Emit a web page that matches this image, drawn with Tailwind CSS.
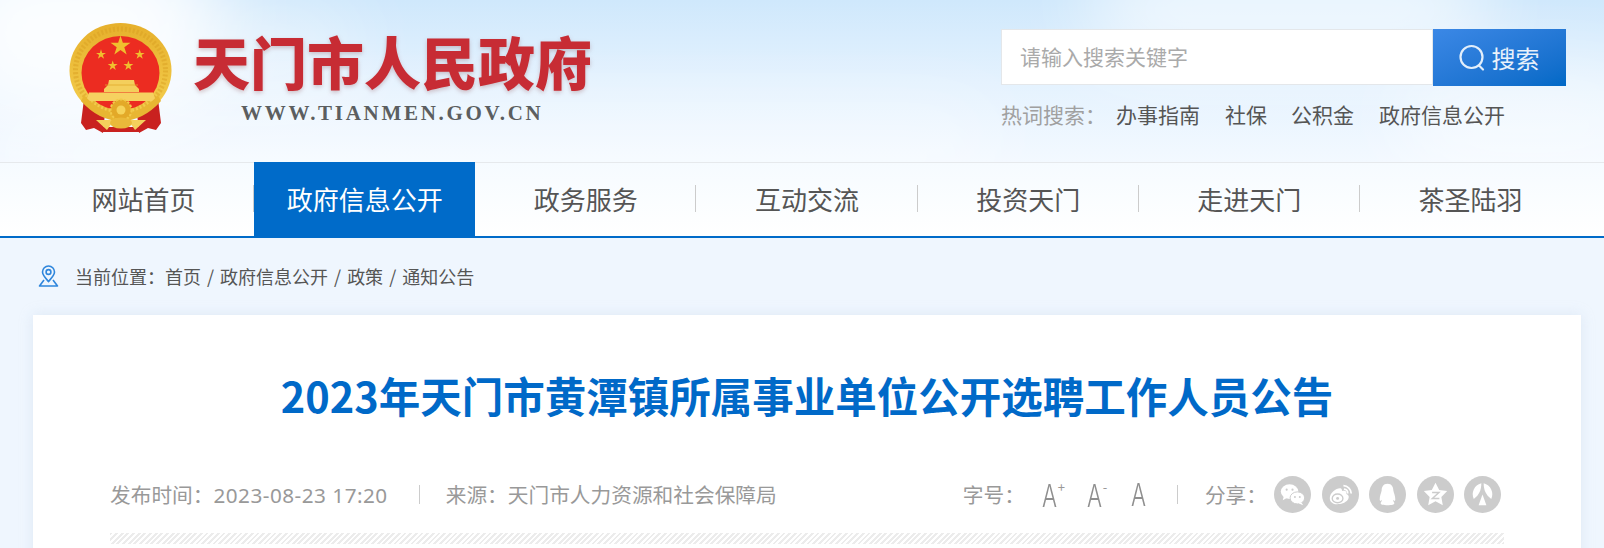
<!DOCTYPE html>
<html lang="zh-CN">
<head>
  <meta charset="UTF-8">
  <meta name="viewport" content="width=device-width, initial-scale=1.0">
  <title>天门市人民政府</title>
  <script src="https://cdn.jsdelivr.net/npm/@tailwindcss/browser@4"></script>
</head>
<body class="bg-[#eff6fe] font-['Noto_Sans_CJK_SC','Noto_Sans',sans-serif]">
<div class="h-[548px] overflow-hidden">
  <!-- Header -->
  <header class="relative h-[162px] overflow-hidden bg-gradient-to-b from-[#cfe8fc] via-[#e4f2fe] to-[#f3f9ff]">
    <!-- clouds -->
    <div class="absolute -left-[70px] -top-[70px] h-[190px] w-[290px] rounded-full bg-white/90 blur-2xl"></div>
    <div class="absolute left-[120px] top-[10px] h-[90px] w-[240px] rounded-full bg-white/40 blur-2xl"></div>
    <div class="absolute left-[1090px] -top-[40px] h-[100px] w-[400px] rounded-full bg-white/70 blur-2xl"></div>
    <div class="absolute left-[1400px] top-[70px] h-[110px] w-[260px] rounded-full bg-white/50 blur-2xl"></div>
    <div class="absolute left-0 top-[110px] h-[90px] w-[1000px] rounded-full bg-white/40 blur-2xl"></div>

    <div class="relative flex justify-between pl-[69px] pr-[38px]">
      <!-- Logo -->
      <div class="flex items-start">
        <svg class="mt-[23px] h-[110px] w-[104px]" viewBox="0 0 104 110">
          <defs>
            <linearGradient id="gold" x1="0" y1="0" x2="0" y2="1">
              <stop offset="0" stop-color="#e6b02c"/>
              <stop offset="1" stop-color="#f5d050"/>
            </linearGradient>
            <polygon id="star" points="0,-1 0.2245,-0.309 0.951,-0.309 0.363,0.118 0.588,0.809 0,0.382 -0.588,0.809 -0.363,0.118 -0.951,-0.309 -0.2245,-0.309"/>
          </defs>
          <!-- ribbons -->
          <path d="M15 76 L36 90 L34 110 L25 105 L17 107 L12 100 Z" fill="#c9211f"/>
          <path d="M89 76 L68 90 L70 110 L79 105 L87 107 L92 100 Z" fill="#c9211f"/>
          <path d="M33 104 H71 V109 H33 Z" fill="#c9211f"/>
          <!-- ring -->
          <ellipse cx="51.500" cy="47.500" rx="51" ry="47.500" fill="url(#gold)"/>
          <ellipse cx="51.500" cy="47.500" rx="45" ry="41.500" fill="none" stroke="#d99f22" stroke-width="5" stroke-dasharray="2 2" opacity="0.5"/>
          <ellipse cx="51.500" cy="50" rx="39" ry="37" fill="#ec2c21"/>
          <!-- stars -->
          <use href="#star" fill="#f0bf2e" transform="translate(51.500 23) scale(10.500)"/>
          <use href="#star" fill="#f0bf2e" transform="translate(32 31.500) scale(5.200)"/>
          <use href="#star" fill="#f0bf2e" transform="translate(70.700 31.500) scale(5.200)"/>
          <use href="#star" fill="#f0bf2e" transform="translate(43.700 42.700) scale(5.200)"/>
          <use href="#star" fill="#f0bf2e" transform="translate(59.400 42.700) scale(5.200)"/>
          <!-- Tiananmen -->
          <path d="M40 57 H65 L66 62 L70 66 V69 H35 V66 L39 62 Z" fill="#f4cf5c"/>
          <path d="M36 62 H69" stroke="#e2a92c" stroke-width="0.800"/>
          <path d="M20 69.500 H84 L87 78 H17 Z" fill="#f6d160"/>
          <!-- wreath base and gear -->
          <path d="M15 72 Q30 90 52 90 Q74 90 89 72 L92 78 Q74 98 52 98 Q30 98 12 78 Z" fill="#e8b632"/>
          <circle cx="52" cy="87" r="10.500" fill="#e3a928" stroke="#f2c94a" stroke-width="2" stroke-dasharray="2.500 1.500"/>
          <circle cx="52" cy="87" r="4.500" fill="#f6d35a"/>
          <path d="M27 97 L45 97 L38 107 Z M77 97 L59 97 L66 107 Z" fill="#f4cf5c"/>
          <ellipse cx="52" cy="100" rx="11" ry="5.500" fill="#eab93a"/>
        </svg>
        <div class="ml-[20px] mt-[22px] w-[420px]">
          <div class="whitespace-nowrap text-[57px] font-black leading-[76px] text-[#c72c34] drop-shadow-[0_2px_2px_rgba(120,40,40,0.25)]">天门市人民政府</div>
          <div class="ml-[48px] mt-[3px] whitespace-nowrap font-['Liberation_Serif',serif] text-[21px] font-bold leading-[24px] tracking-[2.7px] text-[#5b5e60]">WWW.TIANMEN.GOV.CN</div>
        </div>
      </div>

      <!-- Search -->
      <div class="mt-[29px] w-[565px]">
        <div class="flex h-[57px]">
          <div class="mb-[1px] flex flex-1 items-center border border-[#e4e7ea] bg-white pl-[18px] text-[21px] text-[#aaa]">请输入搜索关键字</div>
          <button class="flex w-[133px] items-center justify-center gap-[6px] bg-gradient-to-br from-[#3b88e6] to-[#0069c6] pr-[2px] text-[24px] text-white/90">
            <svg class="h-[28px] w-[28px]" viewBox="0 0 28 28" fill="none" stroke="#e3effb" stroke-width="2.2" stroke-linecap="round">
              <circle cx="13.500" cy="13" r="11"/>
              <path d="M21 21.500 L25 25.500"/>
            </svg>
            <span>搜索</span>
          </button>
        </div>
        <div class="mt-[11px] flex items-center text-[21px] leading-[34px] text-[#555]">
          <span class="w-[115px] text-[#a0a0a0]">热词搜索：</span>
          <a class="mr-[25px]">办事指南</a>
          <a class="mr-[24px]">社保</a>
          <a class="mr-[25px]">公积金</a>
          <a>政府信息公开</a>
        </div>
      </div>
    </div>
  </header>

  <!-- Navigation -->
  <nav class="border-t border-[#e6e9ec] border-b-2 border-b-[#006bc9] bg-gradient-to-b from-[#f6fbff] to-white">
    <ul class="ml-[33px] grid h-[73px] w-[1548px] grid-cols-7 text-center text-[26px] text-[#555]">
      <li class="relative flex items-center justify-center pb-[3px] after:absolute after:right-0 after:top-[22px] after:h-[27px] after:w-px after:bg-[#ccc]">网站首页</li>
      <li class="-mt-px flex items-center justify-center bg-[#006bc9] pb-[2px] text-white">政府信息公开</li>
      <li class="relative flex items-center justify-center pb-[3px] after:absolute after:right-0 after:top-[22px] after:h-[27px] after:w-px after:bg-[#ccc]">政务服务</li>
      <li class="relative flex items-center justify-center pb-[3px] after:absolute after:right-0 after:top-[22px] after:h-[27px] after:w-px after:bg-[#ccc]">互动交流</li>
      <li class="relative flex items-center justify-center pb-[3px] after:absolute after:right-0 after:top-[22px] after:h-[27px] after:w-px after:bg-[#ccc]">投资天门</li>
      <li class="relative flex items-center justify-center pb-[3px] after:absolute after:right-0 after:top-[22px] after:h-[27px] after:w-px after:bg-[#ccc]">走进天门</li>
      <li class="flex items-center justify-center pb-[3px]">茶圣陆羽</li>
    </ul>
  </nav>

  <!-- Breadcrumb -->
  <div class="flex h-[77px] items-center pl-[38px] text-[18px] text-[#555]">
    <svg class="mb-[1px] h-[22px] w-[21px]" viewBox="0 0 21 22" fill="none" stroke="#2f86dc" stroke-width="1.600">
      <path d="M10.500 16.500 C7 12.500 4.500 10 4.500 7 A6 6 0 0 1 16.500 7 C16.500 10 14 12.500 10.500 16.500 Z"/>
      <circle cx="10.500" cy="7" r="2.400"/>
      <path d="M6 15 L1.500 21 H19.500 L15 15" stroke-linejoin="round"/>
    </svg>
    <span class="ml-[16px]">当前位置：首页<span class="mx-[6px]">/</span>政府信息公开<span class="mx-[6px]">/</span>政策<span class="mx-[6px]">/</span>通知公告</span>
  </div>

  <!-- Article -->
  <main class="ml-[33px] h-[400px] w-[1548px] bg-white px-[77px] shadow-[0_0_12px_rgba(190,205,225,0.35)]">
    <h1 class="pt-[50px] text-center text-[41.500px] font-bold leading-[60px] text-[#0069c8]">2023年天门市黄潭镇所属事业单位公开选聘工作人员公告</h1>

    <div class="mt-[51px] flex h-[38px] items-center justify-between text-[20.700px] text-[#999]">
      <div class="flex items-center">
        <span>发布时间：<span class="font-['Noto_Sans',sans-serif] tracking-[0.5px]">2023-08-23 17:20</span></span>
        <span class="ml-[31px] h-[19px] w-px bg-[#ccc]"></span>
        <span class="ml-[26px]">来源：天门市人力资源和社会保障局</span>
      </div>
      <div class="mr-[3px] flex items-center">
        <span>字号：</span>
        <span class="ml-[17px] flex w-[45px] items-start pt-[2px]"><span class="inline-block origin-left scale-x-[0.72] font-['Inter',sans-serif] text-[31px] font-light leading-[34px] text-[#8f8f8f]">A</span><span class="-ml-[5px] text-[13px] leading-[16px]">+</span></span>
        <span class="flex w-[44px] items-start pt-[2px]"><span class="inline-block origin-left scale-x-[0.72] font-['Inter',sans-serif] text-[31px] font-light leading-[34px] text-[#8f8f8f]">A</span><span class="-ml-[5px] text-[13px] leading-[16px]">-</span></span>
        <span class="w-[46px] pt-[2px]"><span class="inline-block origin-left scale-x-[0.72] font-['Inter',sans-serif] text-[31px] font-light leading-[34px] text-[#8f8f8f]">A</span></span>
        <span class="h-[19px] w-px bg-[#ccc]"></span>
        <span class="ml-[27px] mr-[7px]">分享：</span>
        <div class="flex gap-[10.500px]">
          <!-- wechat -->
          <svg class="h-[37px] w-[37px]" viewBox="0 0 38 38">
            <circle cx="19" cy="19" r="19" fill="#ccc"/>
            <ellipse cx="16" cy="16" rx="9" ry="7.500" fill="#fff"/>
            <path d="M10 21 L9 25 L14 22 Z" fill="#fff"/>
            <ellipse cx="24" cy="22.500" rx="7.500" ry="6.200" fill="#fff" stroke="#ccc" stroke-width="1"/>
            <path d="M28 27 L30 30 L25 28 Z" fill="#fff"/>
            <circle cx="13" cy="14" r="1.100" fill="#ccc"/><circle cx="19" cy="14" r="1.100" fill="#ccc"/>
            <circle cx="21.500" cy="21.500" r="1" fill="#ccc"/><circle cx="26.500" cy="21.500" r="1" fill="#ccc"/>
          </svg>
          <!-- weibo -->
          <svg class="h-[37px] w-[37px]" viewBox="0 0 38 38">
            <circle cx="19" cy="19" r="19" fill="#ccc"/>
            <path d="M8 22.500 C8 17 15 12 19 12.500 C21 13 20.500 15.500 20.500 15.500 C24 14.500 26 16 25 18.500 C28 19.500 28 22 26.500 24.500 C24 28 19 29 15.500 29 C11 29 8 26.500 8 22.500 Z" fill="#fff"/>
            <ellipse cx="16" cy="23" rx="5.500" ry="4.500" fill="none" stroke="#ccc" stroke-width="1.400"/>
            <circle cx="16" cy="23" r="1.500" fill="#ccc"/>
            <path d="M22 10 A8 8 0 0 1 30 18" fill="none" stroke="#fff" stroke-width="1.800"/>
            <path d="M22.500 13.500 A4.500 4.500 0 0 1 26.500 18" fill="none" stroke="#fff" stroke-width="1.600"/>
          </svg>
          <!-- qq -->
          <svg class="h-[37px] w-[37px]" viewBox="0 0 38 38">
            <circle cx="19" cy="19" r="19" fill="#ccc"/>
            <path d="M19 8 C23.500 8 25 11.500 25 15 C25.500 17.500 27 20.500 27 24 C27 26 26 26 24.800 24.500 C24.800 26 25.500 27 26 27.500 C26.500 29.500 23 30 19 30 C15 30 11.500 29.500 12 27.500 C12.500 27 13.200 26 13.200 24.500 C12 26 11 26 11 24 C11 20.500 12.500 17.500 13 15 C13 11.500 14.500 8 19 8 Z" fill="#fff"/>
          </svg>
          <!-- qzone -->
          <svg class="h-[37px] w-[37px]" viewBox="0 0 38 38">
            <circle cx="19" cy="19" r="19" fill="#ccc"/>
            <path d="M19 7 L22.800 14.500 L31 15.500 L25 21.500 L26.500 30 L19 26 L11.500 30 L13 21.500 L7 15.500 L15.200 14.500 Z" fill="#fff"/>
            <path d="M15.500 17 H22.500 L15.800 23 H23" fill="none" stroke="#ccc" stroke-width="1.500"/>
          </svg>
          <!-- renren -->
          <svg class="h-[37px] w-[37px]" viewBox="0 0 38 38">
            <circle cx="19" cy="19" r="19" fill="#ccc"/>
            <path d="M17.800 7.500 C17.800 14 15.800 19.500 10 23.500 C7 17 10.500 9.500 17.800 7.500 Z" fill="#fff"/>
            <path d="M20.200 7.500 C20.200 14 22.200 19.500 28 23.500 C31 17 27.500 9.500 20.200 7.500 Z" fill="#fff"/>
            <path d="M19 19 L23 30 H15 Z" fill="#fff"/>
          </svg>
        </div>
      </div>
    </div>

    <div class="mt-[19px] h-[11px] bg-[repeating-linear-gradient(135deg,#ececec_0,#ececec_2px,#ffffff_2px,#ffffff_4px)]"></div>
  </main>
</div>
</body>
</html>
